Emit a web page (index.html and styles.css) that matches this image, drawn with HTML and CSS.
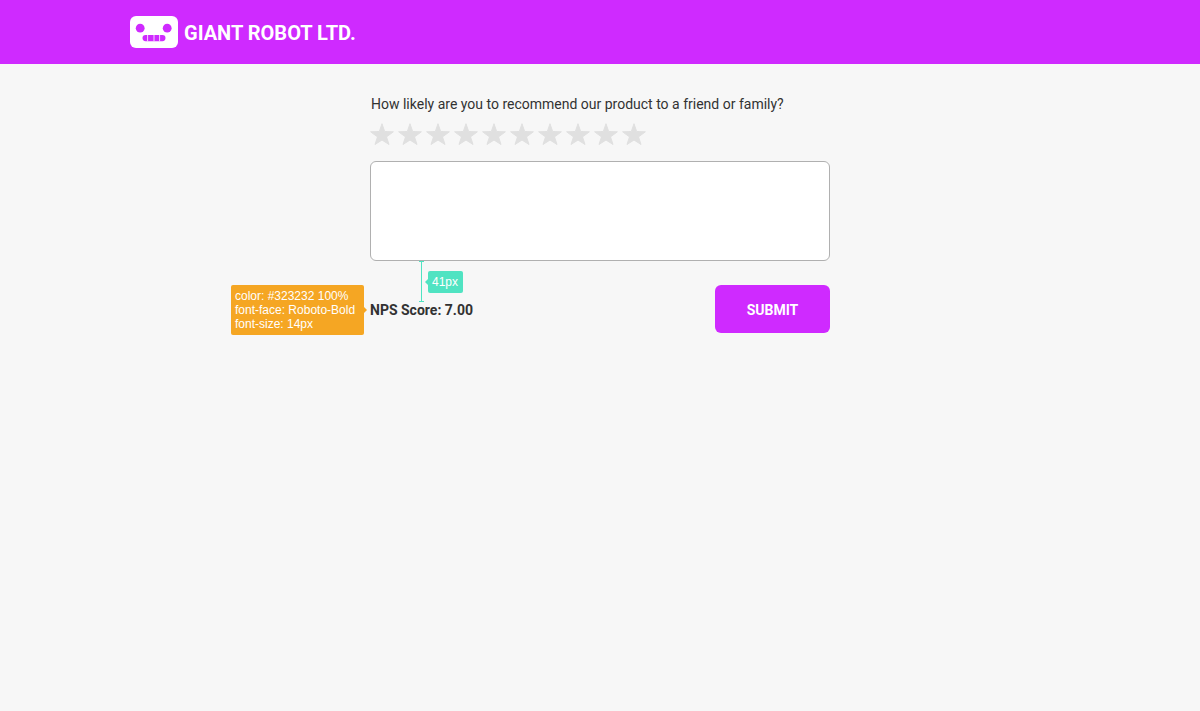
FILE: index.html
```html
<!DOCTYPE html>
<html lang="en">
<head>
<meta charset="utf-8">
<meta name="viewport" content="width=device-width, initial-scale=1">
<title>Giant Robot Ltd.</title>
<link rel="stylesheet" href="styles.css">
</head>
<body>
<svg class="defs" aria-hidden="true">
  <symbol id="star" viewBox="0 0 24 23">
    <path d="M12 0.700 14.700 8.500 23.400 8.800 16.500 13.900 19 21.500 12 17 5 21.500 7.500 13.900 0.600 8.800 9.300 8.500z"/>
  </symbol>
</svg>
<header class="header">
  <div class="brand">
    <svg class="logo" viewBox="0 0 48 32" aria-hidden="true">
      <rect class="logo-face" width="48" height="32" rx="6"/>
      <circle cx="10.2" cy="12.2" r="4.4"/>
      <circle cx="37.2" cy="12.2" r="4.4"/>
      <rect x="12.5" y="19" width="23" height="6.2" rx="3.1"/>
      <path class="logo-teeth" d="M17.6 19v6.200M24 19v6.200M29.600 19v6.200"/>
    </svg>
    <h1 class="brand-name">GIANT ROBOT LTD.</h1>
  </div>
</header>
<main class="main">
  <form class="survey">
    <fieldset class="rating">
      <legend class="question" id="question">How likely are you to recommend our product to a friend or family?</legend>
      <div class="stars">
        <label class="star"><input type="radio" name="score" value="1" aria-label="1"><svg><use href="#star"/></svg></label>
        <label class="star"><input type="radio" name="score" value="2" aria-label="2"><svg><use href="#star"/></svg></label>
        <label class="star"><input type="radio" name="score" value="3" aria-label="3"><svg><use href="#star"/></svg></label>
        <label class="star"><input type="radio" name="score" value="4" aria-label="4"><svg><use href="#star"/></svg></label>
        <label class="star"><input type="radio" name="score" value="5" aria-label="5"><svg><use href="#star"/></svg></label>
        <label class="star"><input type="radio" name="score" value="6" aria-label="6"><svg><use href="#star"/></svg></label>
        <label class="star"><input type="radio" name="score" value="7" aria-label="7"><svg><use href="#star"/></svg></label>
        <label class="star"><input type="radio" name="score" value="8" aria-label="8"><svg><use href="#star"/></svg></label>
        <label class="star"><input type="radio" name="score" value="9" aria-label="9"><svg><use href="#star"/></svg></label>
        <label class="star"><input type="radio" name="score" value="10" aria-label="10"><svg><use href="#star"/></svg></label>
      </div>
    </fieldset>
    <textarea class="comment" aria-labelledby="question"></textarea>
    <div class="actions">
      <div class="score">
        NPS Score: 7.00
        <div class="measure"><span class="measure-label">41px</span></div>
        <div class="spec">color: #323232 100%<br>font-face: Roboto-Bold<br>font-size: 14px</div>
      </div>
      <button class="submit" type="submit">SUBMIT</button>
    </div>
  </form>
</main>
</body>
</html>
```

FILE: styles.css
```css
* {
  box-sizing: border-box;
}

body {
  margin: 0;
  background: #f7f7f7;
  color: #323232;
  font: 14px/20px Roboto, sans-serif;
}

.defs {
  position: absolute;
  width: 0;
  height: 0;
}

.header {
  padding: 16px;
  background: #cf2aff;
}

.brand {
  display: flex;
  align-items: center;
  gap: 6px;
  max-width: 940px;
  margin: 0 auto;
}

.logo {
  width: 48px;
  height: 32px;
  fill: #cf2aff;
}

.logo-face {
  fill: #fff;
}

.logo-teeth {
  stroke: #fff;
  stroke-width: 0.8;
}

.brand-name {
  margin: 0;
  padding-top: 2px;
  color: #fff;
  font-size: 20px;
  line-height: 24px;
  font-weight: 700;
}

.main {
  padding: 30px 16px;
}

.survey {
  max-width: 460px;
  margin: 0 auto;
}

.rating {
  min-width: 0;
  margin: 0;
  padding: 0;
  border: 0;
}

.question {
  padding: 0 1px;
}

.stars {
  display: flex;
  gap: 4px;
  padding: 9px 0 15px;
}

.star {
  position: relative;
  height: 23px;
  cursor: pointer;
}

.star input {
  position: absolute;
  inset: 0;
  margin: 0;
  opacity: 0;
}

.star svg {
  display: block;
  width: 24px;
  height: 23px;
  fill: #e0e0e0;
  stroke: #e0e0e0;
  stroke-linejoin: round;
}

.comment {
  display: block;
  width: 100%;
  height: 100px;
  padding: 12px;
  border: 1px solid #b0b0b0;
  border-radius: 6px;
  background: #fff;
  color: inherit;
  font: inherit;
  resize: none;
}

.actions {
  display: flex;
  align-items: center;
  justify-content: space-between;
  padding-top: 24px;
}

.score {
  position: relative;
  padding-top: 2px;
  font-weight: 700;
}

.submit {
  min-width: 115px;
  padding: 16px 24px 14px;
  border: 0;
  border-radius: 6px;
  background: #cf2aff;
  color: #fff;
  font: 700 14px/18px Roboto, sans-serif;
  cursor: pointer;
}

/* Measurement between the comment box and the score */
.measure {
  position: absolute;
  bottom: 100%;
  left: 49px;
  width: 5px;
  height: 41px;
  margin-bottom: -4px;
  border: solid #50e3c2;
  border-width: 1px 0;
  background: linear-gradient(#50e3c2, #50e3c2) center / 1px 100% no-repeat;
}

.measure-label,
.spec {
  position: absolute;
  padding: 4px;
  border-radius: 2px;
  color: #fff;
  font: 12px/14px "Liberation Sans", Arial, sans-serif;
  white-space: nowrap;
}

.measure-label {
  top: 9px;
  left: 9px;
  min-width: 35px;
  background: #50e3c2;
}

.spec {
  top: -13px;
  right: 100%;
  min-width: 133px;
  margin-right: 6px;
  background: #f5a623;
}

.measure-label::before,
.spec::after {
  content: "";
  position: absolute;
  top: 50%;
  margin-top: -3px;
  border: 3px solid transparent;
}

.measure-label::before {
  right: 100%;
  border-left: 0;
  border-right-color: #50e3c2;
}

.spec::after {
  left: 100%;
  border-right: 0;
  border-left-color: #f5a623;
}
```
